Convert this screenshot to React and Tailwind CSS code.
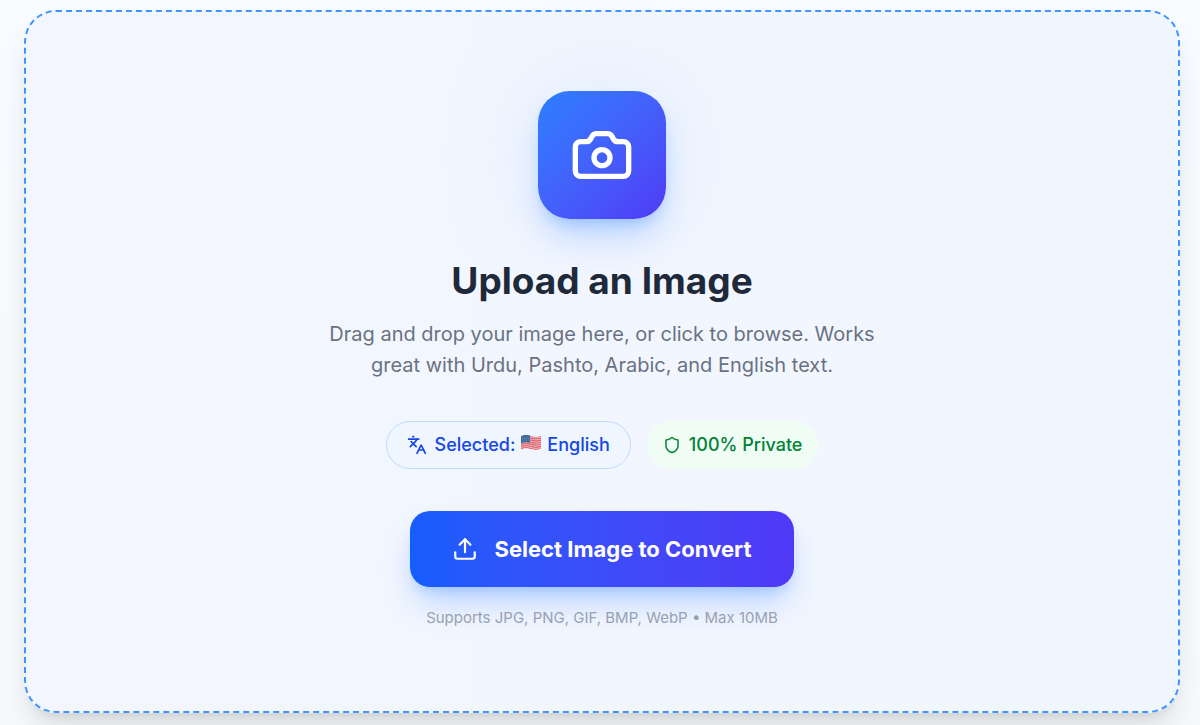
import { useRef } from "react"
import { Camera, Languages, Shield, Upload } from "lucide-react"

const FlagUS = () => (
    <svg viewBox="0 0 22 18" className="w-[22px] h-[18px] -mt-1" role="img" aria-label="US">
        <defs>
            <clipPath id="flag">
                <path d="M1 2.5C4.500 .5 7.500 .8 11 2s6.500 1.300 10 0v12.500c-3.500 1.700-6.500 1.600-10 .5s-6.500-1-10 .8z" />
            </clipPath>
        </defs>
        <g clipPath="url(#flag)">
            <rect width="22" height="18" fill="#f0cdd2" />
            {[0, 1, 2, 3, 4, 5, 6].map((i) => (
                <path
                    key={i}
                    d="M0 2.500C4 .5 7.500 .8 11 2s6.500 1.300 11 -.3"
                    transform={`translate(0 ${i * 2.1})`}
                    stroke="#df6570"
                    strokeWidth="1.3"
                    fill="none"
                />
            ))}
            <path d="M0 0h10v8.800C7 8 4 8 0 9.500z" fill="#3f6a9c" />
            <path d="M2 4h7M2 6h7" stroke="#8aa6c8" strokeWidth=".6" strokeDasharray="1 1" />
        </g>
    </svg>
)

export default function App() {

    const inputRef = useRef(null)

    return (
        <main className="min-h-screen bg-gradient-to-b from-[#f8fbff] to-[#f7fafc] pt-[10px] pr-5 pb-3 pl-6 font-['Inter',sans-serif]">
            <section className="flex flex-col items-center rounded-[32px] border-2 border-dashed border-[#3f95ff] bg-gradient-to-r from-[#f3f6fe] to-[#f0f6ff] px-6 pt-[79px] pb-[81px] text-center shadow-[0_20px_30px_-6px_rgba(0,0,0,0.12),0_8px_10px_-6px_rgba(0,0,0,0.08)]">
                <div className="flex size-32 items-center justify-center rounded-[32px] bg-gradient-to-br from-[#2b7fff] to-[#4f39f6] text-white shadow-[0_20px_32px_-6px_rgba(43,127,255,0.28),0_8px_14px_-6px_rgba(43,127,255,0.3),0_0_80px_10px_rgba(190,219,255,0.25)]">
                    <Camera size={64} />
                </div>

                <h1 className="mt-[42px] text-[37px] leading-10 font-bold text-[#1e2939]">Upload an Image</h1>
                <p className="mt-[18px] max-w-[576px] text-[20px] leading-[31px] text-[#6a7282]">
                    Drag and drop your image here, or click to browse. Works great with Urdu, Pashto, Arabic, and English text.
                </p>

                <div className="mt-10 flex flex-wrap justify-center gap-4 text-[18px] leading-6 font-medium">
                    <div className="flex h-12 items-center gap-2 rounded-full border border-[#bedbff] bg-[#eff6ff] px-5 text-[#1447e6]">
                        <Languages size={20} />
                        <span className="flex items-center gap-[5px]">
                            Selected: <FlagUS /> English
                        </span>
                    </div>
                    <div className="flex h-12 items-center gap-2 rounded-full bg-[#f0fdf4] px-4 text-[#008236]">
                        <Shield size={18} />
                        <span>100% Private</span>
                    </div>
                </div>

                <input
                    ref={inputRef}
                    type="file"
                    accept="image/*"
                    aria-label="Image file"
                    className="hidden"
                />
                <button
                    type="button"
                    onClick={() => inputRef.current.click()}
                    className="mt-[42px] flex h-[76px] cursor-pointer items-center gap-4 rounded-[20px] bg-gradient-to-r from-[#155dfc] to-[#4f39f6] px-[42px] text-[22px] font-bold text-white shadow-[0_20px_32px_-6px_rgba(43,127,255,0.28),0_8px_14px_-6px_rgba(43,127,255,0.3)]"
                >
                    <Upload size={26} />
                    Select Image to Convert
                </button>
                <p className="mt-[19px] text-[15px] leading-6 text-[#99a1af]">
                    Supports JPG, PNG, GIF, BMP, WebP • Max 10MB
                </p>
            </section>
        </main>
    )
}
